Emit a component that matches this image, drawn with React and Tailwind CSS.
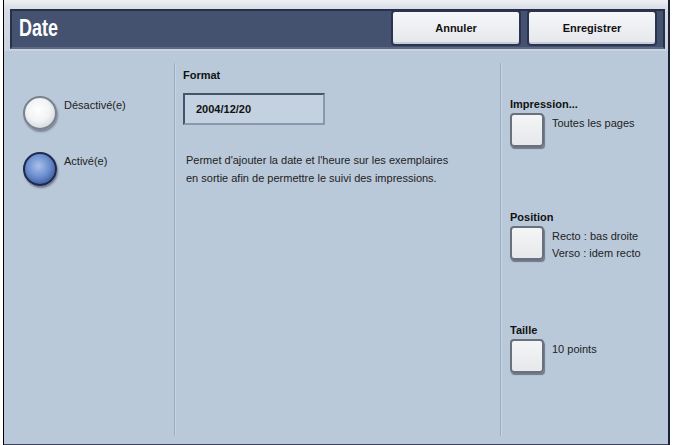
import React from 'react';

const font = "font-['Liberation_Sans',Arial,sans-serif]";

const Radio = ({ label, selected }) => (
  <div className="flex items-start gap-[7px]">
    <div
      className={
        selected
          ? 'w-[34px] h-[34px] rounded-full border-[2px] border-[#1f2a4a] bg-[radial-gradient(circle_at_45%_40%,#a9c0ea,#6d8fd0_45%,#3d5a9c_80%,#2b3f70)] shadow-[1px_2px_2px_rgba(40,50,70,0.5)]'
          : 'w-[34px] h-[34px] rounded-full border-[2px] border-[#7b818c] bg-[radial-gradient(circle_at_45%_40%,#ffffff,#f1f3f5_45%,#d6dadf_75%,#aeb4bd)] shadow-[1px_2px_2px_rgba(40,50,70,0.45)]'
      }
    />
    <span className="text-[11px] leading-[14px] text-[#222] mt-[2px]">{label}</span>
  </div>
);

const SquareButton = () => (
  <div className="w-[34px] h-[34px] rounded-[4px] border-[2px] border-[#6b717c] bg-[linear-gradient(#f4f5f6,#e6e8eb)] shadow-[1px_2px_1px_rgba(60,66,80,0.6)]" />
);

const Setting = ({ title, lines }) => (
  <div className="h-[113px]">
    <div className="text-[11px] leading-[14px] font-bold text-[#111]">{title}</div>
    <div className="flex items-start gap-[8px] mt-[2px]">
      <SquareButton />
      <div className="text-[11px] leading-[17px] text-[#222] mt-[2px]">
        {lines.map((l) => (
          <div key={l}>{l}</div>
        ))}
      </div>
    </div>
  </div>
);

const HeaderButton = ({ children, width }) => (
  <div
    className={`${width} h-[36px] rounded-[4px] border-[2px] border-[#2a3350] bg-[linear-gradient(#f6f7f9,#e4e7ec)] flex items-center justify-center text-[11px] font-bold text-[#111] shadow-[inset_0_-2px_0_#c8ced8]`}
  >
    {children}
  </div>
);

export default function App() {
  return (
    <div className={`w-[673px] h-[445px] bg-white pl-[3px] ${font}`}>
      <div className="w-[667px] h-[445px] border-l border-r-[2px] border-l-black border-r-[#1c2233] bg-[linear-gradient(#eef0f3,#d6dce4_10px,#c9d3de_52px)] flex flex-col">
        <div className="pt-[9px] pl-[6px] pr-[3px]">
          <div className="h-[40px] flex items-center border-[2px] border-[#27304a] border-b-[#5d6a86] bg-[#45526f]">
            <div className="flex-1 pl-[7px]">
              <span className="inline-block text-[23px] leading-[24px] font-bold text-white origin-left scale-x-[0.78]">
                Date
              </span>
            </div>
            <div className="flex gap-[6px] pr-[6px] -mt-[2px]">
              <HeaderButton width="w-[130px]">Annuler</HeaderButton>
              <HeaderButton width="w-[130px]">Enregistrer</HeaderButton>
            </div>
          </div>
        </div>
        <div className="flex-1 mt-[2px] bg-[#b9c9da] flex pt-[12px] pb-[8px]">
          <div className="w-[170px] pl-[19px] pt-[33px] flex flex-col gap-[22px]">
            <Radio label="Désactivé(e)" />
            <Radio label="Activé(e)" selected />
          </div>
          <div className="w-[2px] self-stretch border-l border-[#9cadc1] bg-[#c6d3e1]" />
          <div className="flex-1 pl-[7px] pt-[5px]">
            <div className="text-[11px] leading-[14px] font-bold text-[#111]">Format</div>
            <div className="mt-[11px] w-[142px] h-[32px] border-[2px] border-t-[#48536b] border-l-[#48536b] border-b-[#8a98ad] border-r-[#8a98ad] bg-[#c3d1e0] flex items-center pl-[11px] text-[11px] font-bold text-[#111]">
              2004/12/20
            </div>
            <div className="mt-[26px] pl-[3px] text-[11px] leading-[18px] text-[#222]">
              <div>Permet d'ajouter la date et l'heure sur les exemplaires</div>
              <div>en sortie afin de permettre le suivi des impressions.</div>
            </div>
          </div>
          <div className="w-[2px] self-stretch border-l border-[#9cadc1] bg-[#c6d3e1]" />
          <div className="w-[166px] pl-[8px] pt-[34px]">
            <Setting title="Impression..." lines={['Toutes les pages']} />
            <Setting title="Position" lines={['Recto : bas droite', 'Verso : idem recto']} />
            <Setting title="Taille" lines={['10 points']} />
          </div>
        </div>
        <div className="h-[6px] bg-[linear-gradient(#56627c,#1e2436)]" />
      </div>
    </div>
  );
}
